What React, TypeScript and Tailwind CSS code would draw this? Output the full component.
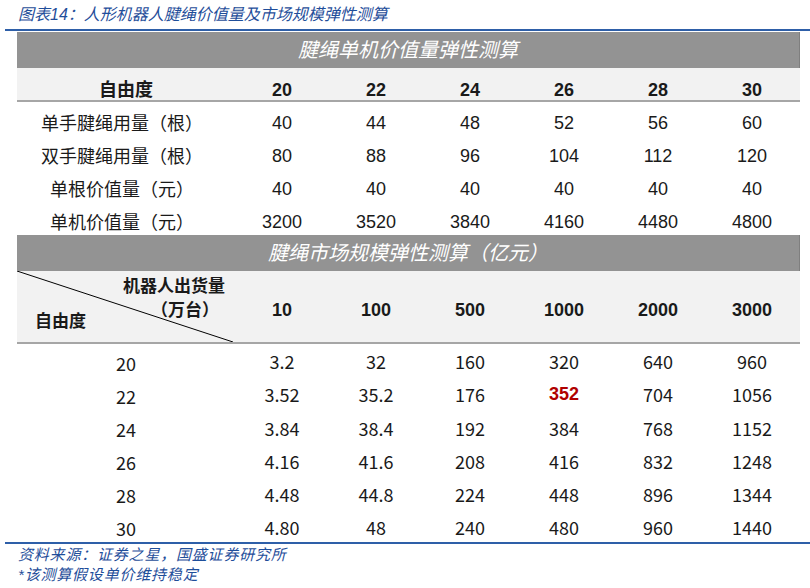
import React from "react";

const cols = ["20", "22", "24", "26", "28", "30"];

const unitRows = [
  { label: "单手腱绳用量（根）", values: ["40", "44", "48", "52", "56", "60"] },
  { label: "双手腱绳用量（根）", values: ["80", "88", "96", "104", "112", "120"] },
  { label: "单根价值量（元）", values: ["40", "40", "40", "40", "40", "40"] },
  { label: "单机价值量（元）", values: ["3200", "3520", "3840", "4160", "4480", "4800"] },
];

const shipments = ["10", "100", "500", "1000", "2000", "3000"];

const marketRows = [
  { dof: "20", values: ["3.2", "32", "160", "320", "640", "960"] },
  { dof: "22", values: ["3.52", "35.2", "176", "352", "704", "1056"] },
  { dof: "24", values: ["3.84", "38.4", "192", "384", "768", "1152"] },
  { dof: "26", values: ["4.16", "41.6", "208", "416", "832", "1248"] },
  { dof: "28", values: ["4.48", "44.8", "224", "448", "896", "1344"] },
  { dof: "30", values: ["4.80", "48", "240", "480", "960", "1440"] },
];

const grid = "grid grid-cols-[218px_repeat(6,94px)]";
const cjk = "font-['Liberation_Sans','Noto_Sans_CJK_SC',sans-serif]";
const num = "font-['Noto_Sans_CJK_SC','Liberation_Sans',sans-serif]";

const Band = ({ children }: { children: React.ReactNode }) => (
  <div className="h-[36px] bg-[#939393] border-r border-[#7f7f7f] flex items-center justify-center">
    <span className={`text-white italic text-[20px] ${cjk}`}>{children}</span>
  </div>
);

export default function App() {
  return (
    <div className={`w-[810px] h-[588px] bg-white text-[#1a1a1a] ${cjk}`}>
      {/* title */}
      <div className="h-[29px] pl-[18px] flex items-center">
        <span className="italic text-[16px] text-[#1f4e9a]">
          图表14：人形机器人腱绳价值量及市场规模弹性测算
        </span>
      </div>
      <div className="ml-[5px] h-[2px] bg-[#2e5fa8]" />

      <div className="ml-[17px] w-[783px] mt-[1px]">
        <Band>腱绳单机价值量弹性测算</Band>

        {/* header row 1 */}
        <div className={`${grid} h-[34px] bg-[#f2f2f2] border-b-2 border-[#a6a6a6]`}>
          <div className="flex items-center justify-center pt-[9px] font-bold text-[18px]">自由度</div>
          {cols.map((c) => (
            <div key={c} className="flex items-center justify-center pt-[9px] font-bold text-[18px]">
              {c}
            </div>
          ))}
        </div>

        {unitRows.map((r) => (
          <div key={r.label} className={`${grid} h-[33px]`}>
            <div className="flex items-center justify-center pt-[9px] pr-[8px] text-[18px]">{r.label}</div>
            {r.values.map((v, i) => (
              <div key={i} className="flex items-center justify-center pt-[7px] text-[18px]">
                {v}
              </div>
            ))}
          </div>
        ))}

        <div className="mt-[1px]">
          <Band>腱绳市场规模弹性测算（亿元）</Band>
        </div>

        {/* header row 2 */}
        <div className={`${grid} h-[73px] bg-[#f2f2f2] border-b-2 border-[#a6a6a6]`}>
          <div className="relative flex justify-between font-bold text-[17px]">
            <svg className="absolute inset-0" width="218" height="71" viewBox="0 0 218 71">
              <line x1="0" y1="0" x2="216" y2="71" stroke="#000" strokeWidth="1" />
            </svg>
            <div className="self-end pb-[8px] pl-[18px]">自由度</div>
            <div className="flex flex-col items-end pt-[4px] pr-[10px] leading-[24px]">
              <span>机器人出货量</span>
              <span className="pr-[6px]">（万台）</span>
            </div>
          </div>
          {shipments.map((s) => (
            <div key={s} className="flex items-center justify-center pt-[7px] font-bold text-[18px]">
              {s}
            </div>
          ))}
        </div>

        {marketRows.map((r, idx) => (
          <div key={r.dof} className={`${grid} h-[33px]`}>
            <div className={`flex items-center justify-center pt-[5px] text-[18px] ${num}`}>{r.dof}</div>
            {r.values.map((v, i) => (
              <div
                key={i}
                className={`flex items-center justify-center ${idx < 2 ? "pt-[1px]" : "pt-[3px]"} text-[18px] ${
                  v === "352" ? "font-bold text-[#b00000] font-['Liberation_Sans',sans-serif]" : num
                }`}
              >
                {v}
              </div>
            ))}
          </div>
        ))}
      </div>

      <div className="ml-[5px] h-[2px] bg-[#2e5fa8]" />
      <div className="pl-[18px] pt-[1px] italic text-[15px] tracking-[0.8px] leading-[20px] text-[#1f4e9a]">
        <div>资料来源：证券之星，国盛证券研究所</div>
        <div>*该测算假设单价维持稳定</div>
      </div>
    </div>
  );
}
